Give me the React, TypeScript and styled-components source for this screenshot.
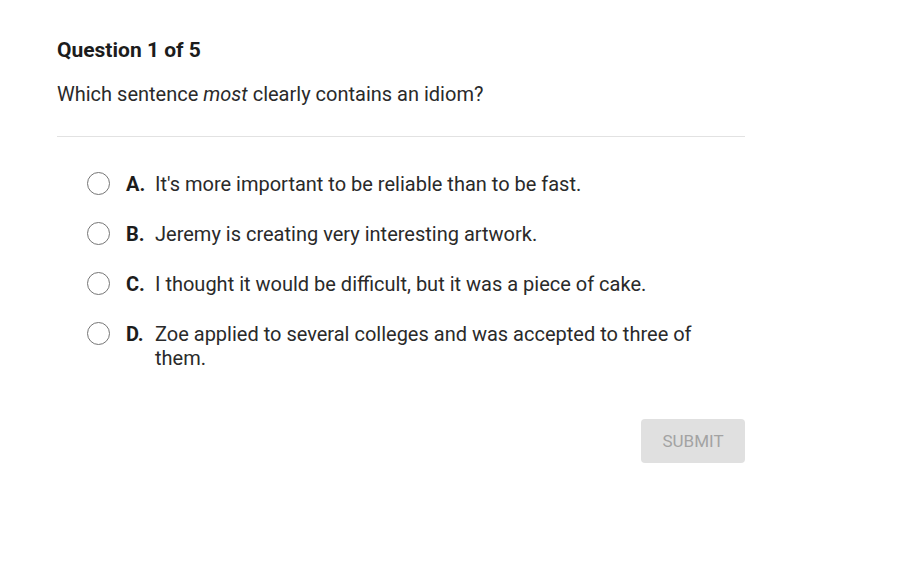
import styled, { createGlobalStyle } from 'styled-components'

const GlobalStyle = createGlobalStyle`
  body {
    margin: 0;
    background: #ffffff;
    font-family: Roboto, 'Liberation Sans', sans-serif;
    color: #222222;
  }
`

const Page = styled.div`
  padding: 38px 0 0 57px;
  width: 688px;
`

const Title = styled.h1`
  margin: 0;
  font-size: 21px;
  font-weight: 700;
  line-height: 24px;
  color: #1c1c1c;
`

const Prompt = styled.p`
  margin: 19px 0 0;
  font-size: 20px;
  line-height: 26px;
  color: #2a2a2a;
  padding-bottom: 29px;
  border-bottom: 1px solid #e2e2e2;
`

const Options = styled.div`
  display: flex;
  flex-direction: column;
  gap: 26px;
  padding: 35px 0 0 30px;
`

const Option = styled.label`
  display: flex;
  align-items: flex-start;
  cursor: pointer;
  font-size: 20px;
  line-height: 24px;
  color: #2a2a2a;
`

const Radio = styled.span`
  flex: none;
  width: 21px;
  height: 21px;
  border: 1.5px solid #757575;
  border-radius: 50%;
  margin: 0 16px 0 0;
  box-sizing: content-box;
`

const Letter = styled.span`
  flex: none;
  font-weight: 700;
  color: #1c1c1c;
  width: 29px;
`

const Text = styled.span`
  max-width: 560px;
`

const Footer = styled.div`
  display: flex;
  justify-content: flex-end;
  margin-top: 49px;
`

const SubmitButton = styled.button`
  width: 104px;
  height: 44px;
  border: none;
  border-radius: 4px;
  background: #e0e0e0;
  color: #a3a3a3;
  font-family: Roboto, 'Liberation Sans', sans-serif;
  font-size: 17px;
  font-weight: 400;
  cursor: default;
`

const answers = [
  { letter: 'A.', text: "It's more important to be reliable than to be fast." },
  { letter: 'B.', text: 'Jeremy is creating very interesting artwork.' },
  { letter: 'C.', text: 'I thought it would be difficult, but it was a piece of cake.' },
  { letter: 'D.', text: 'Zoe applied to several colleges and was accepted to three of them.' },
]

export default function App() {
  return (
    <>
      <GlobalStyle />
      <Page>
        <Title>Question 1 of 5</Title>
        <Prompt>
          Which sentence <em>most</em> clearly contains an idiom?
        </Prompt>
        <Options>
          {answers.map((a) => (
            <Option key={a.letter}>
              <Radio />
              <Letter>{a.letter}</Letter>
              <Text>{a.text}</Text>
            </Option>
          ))}
        </Options>
        <Footer>
          <SubmitButton disabled>SUBMIT</SubmitButton>
        </Footer>
      </Page>
    </>
  )
}
